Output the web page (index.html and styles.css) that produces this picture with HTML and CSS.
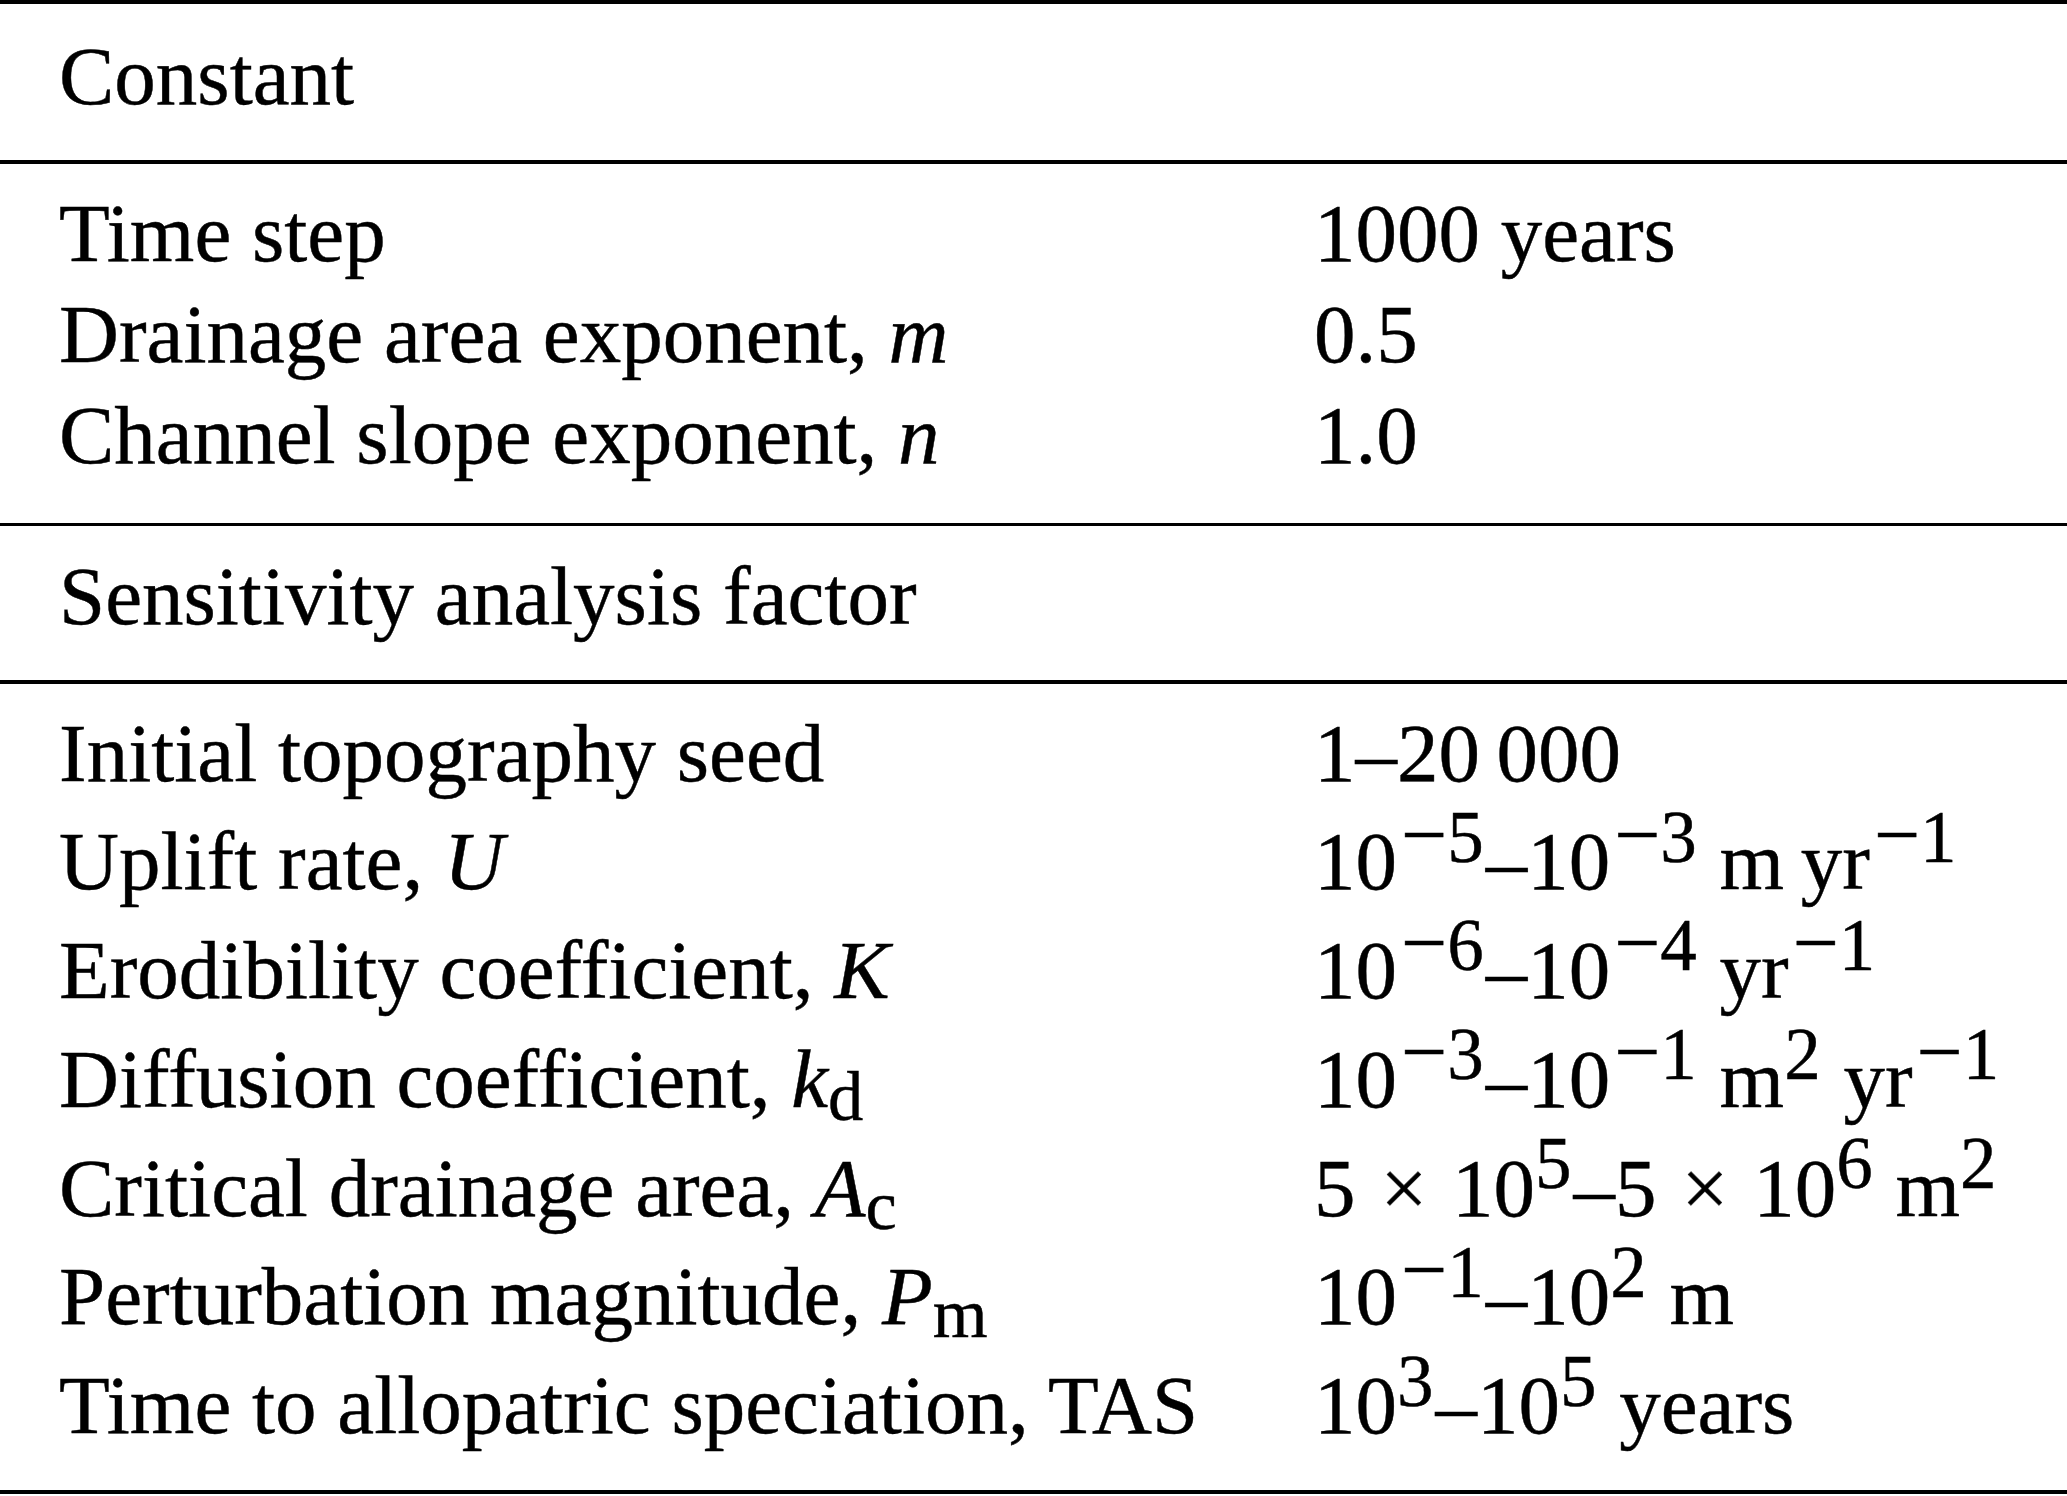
FILE: index.html
```html
<!DOCTYPE html>
<html lang="en">
<head>
<meta charset="utf-8">
<title>Model parameters</title>
<link rel="stylesheet" href="styles.css">
</head>
<body>
<div class="tbl">
  <div class="rule"></div>
  <div class="head"><span>Constant</span></div>
  <div class="rule"></div>
  <div class="sec sec1">
    <div class="row"><span>Time step</span><span>1000 years</span></div>
    <div class="row"><span>Drainage area exponent, <i>m</i></span><span>0.5</span></div>
    <div class="row"><span>Channel slope exponent, <i>n</i></span><span>1.0</span></div>
  </div>
  <div class="rule"></div>
  <div class="head head2"><span>Sensitivity analysis factor</span></div>
  <div class="rule"></div>
  <div class="sec sec2">
    <div class="row"><span>Initial topography seed</span><span>1–20&thinsp;000</span></div>
    <div class="row"><span>Uplift rate, <i>U</i></span><span>10<span class="sup"><span class="mi">−</span>5</span>–10<span class="sup"><span class="mi">−</span>3</span> m&thinsp;yr<span class="sup"><span class="mi">−</span>1</span></span></div>
    <div class="row"><span>Erodibility coefficient, <i>K</i></span><span>10<span class="sup"><span class="mi">−</span>6</span>–10<span class="sup"><span class="mi">−</span>4</span> yr<span class="sup"><span class="mi">−</span>1</span></span></div>
    <div class="row"><span>Diffusion coefficient, <i>k</i><span class="sub">d</span></span><span>10<span class="sup"><span class="mi">−</span>3</span>–10<span class="sup"><span class="mi">−</span>1</span> m<span class="sup">2</span> yr<span class="sup"><span class="mi">−</span>1</span></span></div>
    <div class="row"><span>Critical drainage area, <i>A</i><span class="sub">c</span></span><span>5<span class="times">×</span>10<span class="sup">5</span>–5<span class="times">×</span>10<span class="sup">6</span> m<span class="sup">2</span></span></div>
    <div class="row"><span>Perturbation magnitude, <i>P</i><span class="sub">m</span></span><span>10<span class="sup"><span class="mi">−</span>1</span>–10<span class="sup">2</span> m</span></div>
    <div class="row"><span>Time to allopatric speciation, TAS</span><span>10<span class="sup">3</span>–10<span class="sup">5</span> years</span></div>
  </div>
  <div class="rule rule-bottom"></div>
</div>
</body>
</html>
```

FILE: styles.css
```css
html, body {
  margin: 0;
  padding: 0;
  background: #ffffff;
}

.tbl {
  width: 2067px;
  font-family: "Liberation Serif", "Times New Roman", serif;
  font-size: 83px;
  color: #000000;
  -webkit-text-stroke: 0.45px #000000;
}

.rule {
  height: 3.5px;
  background: #000000;
}

.rule-bottom {
  height: 4px;
}

.head {
  height: 101px;
  line-height: 101px;
  padding: 22px 0 33.5px 59px;
  white-space: nowrap;
}

.head2 {
  padding-top: 19.5px;
}

.sec1 {
  padding: 19.5px 0 36.5px;
}

.sec2 {
  padding: 15px 0 30.4px;
}

.row {
  display: grid;
  grid-template-columns: 1255px 1fr;
  padding-left: 59px;
  white-space: nowrap;
}

.sec1 .row {
  height: 101px;
  line-height: 101px;
}

.sec2 .row {
  height: 108.8px;
  line-height: 108.8px;
}

i {
  font-style: italic;
}

.times {
  margin: 0 0.3em;
}

.sup {
  font-size: 0.88em;
  vertical-align: 0.38em;
  line-height: 0;
  margin-right: 2px;
}

.sup .mi {
  font-size: 1.12em;
  margin-left: 4px;
}

.sub {
  font-size: 0.85em;
  vertical-align: -0.18em;
  line-height: 0;
}
```
